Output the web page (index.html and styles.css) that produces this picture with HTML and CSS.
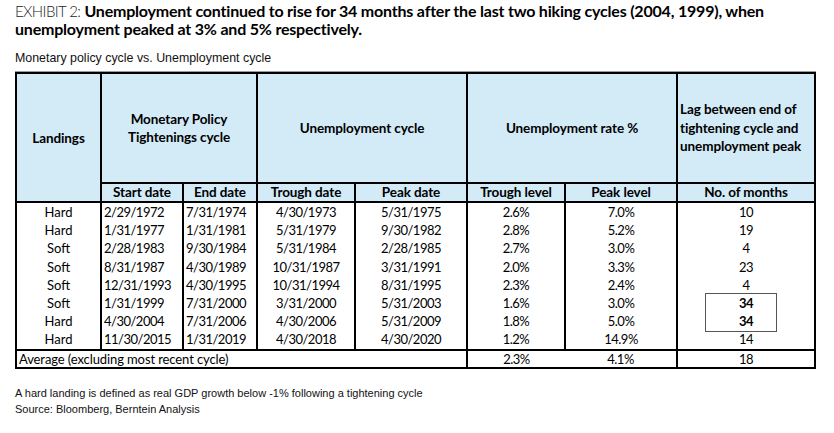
FILE: index.html
```html
<!DOCTYPE html>
<html lang="en">
<head>
<meta charset="utf-8">
<title>Exhibit 2</title>
<link rel="stylesheet" href="styles.css">
</head>
<body>
<div class="page">
  <div class="title">
    <div class="title-line"><span class="exhibit">EXHIBIT 2:</span> <span class="headline">Unemployment continued to rise for 34 months after the last two hiking cycles (2004, 1999), when</span></div>
    <div class="title-line"><span class="headline">unemployment peaked at 3% and 5% respectively.</span></div>
  </div>
  <div class="subtitle">Monetary policy cycle vs. Unemployment cycle</div>
  <table class="data">
    <colgroup>
      <col class="c-land"><col class="c-start"><col class="c-end"><col class="c-tdate"><col class="c-pdate"><col class="c-tlev"><col class="c-plev"><col class="c-lag">
    </colgroup>
    <thead>
      <tr class="head-main">
        <th rowspan="2" class="h-land">Landings</th>
        <th colspan="2">Monetary Policy<br>Tightenings cycle</th>
        <th colspan="2">Unemployment cycle</th>
        <th colspan="2">Unemployment rate %</th>
        <th class="h-lag">Lag between end of tightening cycle and unemployment peak</th>
      </tr>
      <tr class="head-sub">
        <th>Start date</th>
        <th>End date</th>
        <th>Trough date</th>
        <th>Peak date</th>
        <th>Trough level</th>
        <th>Peak level</th>
        <th>No. of months</th>
      </tr>
    </thead>
    <tbody>
      <tr><td class="land">Hard</td><td class="left">2/29/1972</td><td class="left">7/31/1974</td><td>4/30/1973</td><td>5/31/1975</td><td>2.6%</td><td>7.0%</td><td>10</td></tr>
      <tr><td class="land">Hard</td><td class="left">1/31/1977</td><td class="left">1/31/1981</td><td>5/31/1979</td><td>9/30/1982</td><td>2.8%</td><td>5.2%</td><td>19</td></tr>
      <tr><td class="land">Soft</td><td class="left">2/28/1983</td><td class="left">9/30/1984</td><td>5/31/1984</td><td>2/28/1985</td><td>2.7%</td><td>3.0%</td><td>4</td></tr>
      <tr><td class="land">Soft</td><td class="left">8/31/1987</td><td class="left">4/30/1989</td><td>10/31/1987</td><td>3/31/1991</td><td>2.0%</td><td>3.3%</td><td>23</td></tr>
      <tr><td class="land">Soft</td><td class="left">12/31/1993</td><td class="left">4/30/1995</td><td>10/31/1994</td><td>8/31/1995</td><td>2.3%</td><td>2.4%</td><td>4</td></tr>
      <tr><td class="land">Soft</td><td class="left">1/31/1999</td><td class="left">7/31/2000</td><td>3/31/2000</td><td>5/31/2003</td><td>1.6%</td><td>3.0%</td><td class="boxed"><span class="highlight"></span><b>34</b></td></tr>
      <tr><td class="land">Hard</td><td class="left">4/30/2004</td><td class="left">7/31/2006</td><td>4/30/2006</td><td>5/31/2009</td><td>1.8%</td><td>5.0%</td><td><b>34</b></td></tr>
      <tr><td class="land">Hard</td><td class="left">11/30/2015</td><td class="left">1/31/2019</td><td>4/30/2018</td><td>4/30/2020</td><td>1.2%</td><td>14.9%</td><td>14</td></tr>
    </tbody>
    <tfoot>
      <tr class="avg">
        <td colspan="5" class="left avg-label">Average (excluding most recent cycle)</td>
        <td class="no-right">2.3%</td>
        <td class="no-left">4.1%</td>
        <td>18</td>
      </tr>
    </tfoot>
  </table>
  <div class="notes">
    <div>A hard landing is defined as real GDP growth below -1% following a tightening cycle</div>
    <div>Source: Bloomberg, Berntein Analysis</div>
  </div>
</div>
</body>
</html>
```
FILE: styles.css
```css
html, body {
  margin: 0;
  padding: 0;
  background: #ffffff;
}

.page {
  padding: 2px 0 0 15px;
  color: #000;
}

.title {
  font-family: Lato, "Liberation Sans", sans-serif;
  font-size: 16px;
  line-height: 18px;
  width: 800px;
}

.title-line {
  white-space: nowrap;
}

.exhibit {
  font-weight: 300;
  font-size: 15px;
  letter-spacing: -0.6px;
  color: #222;
}

.headline {
  font-weight: 700;
  letter-spacing: -0.2px;
}

.subtitle {
  font-family: "Liberation Sans", Arial, sans-serif;
  font-size: 12.4px;
  line-height: 14px;
  margin-top: 13px;
  color: #111;
}

.data {
  margin-top: 7px;
  border-collapse: collapse;
  table-layout: fixed;
  width: 799px;
  font-family: Lato, "Liberation Sans", sans-serif;
  font-size: 13px;
  letter-spacing: -0.5px;
  color: #000;
  box-shadow: 0 -1px 0 #9a9a9a;
}

.c-land { width: 85px; }
.c-start { width: 82px; }
.c-end { width: 74px; }
.c-tdate { width: 98px; }
.c-pdate { width: 112px; }
.c-tlev { width: 98px; }
.c-plev { width: 112px; }
.c-lag { width: 138px; }

.data th,
.data td {
  border-left: 2px solid #000;
  border-right: 2px solid #000;
  padding: 0 2px;
  text-align: center;
  white-space: nowrap;
}

.data th {
  background: #d3eaf7;
  font-weight: 700;
  font-size: 13.5px;
  letter-spacing: -0.1px;
  border: 2px solid #000;
}

.head-main th {
  height: 108px;
  line-height: 18px;
  vertical-align: middle;
}

.head-main .h-lag {
  text-align: left;
  white-space: normal;
  padding: 0 4px 0 2px;
  line-height: 18.5px;
}

.head-sub th {
  height: 17px;
  line-height: 17px;
}

.data tbody td {
  height: 18.2px;
  line-height: 18px;
}

.data td.land {
  letter-spacing: 0;
}

.data td.avg-label {
  font-size: 13px;
  letter-spacing: -0.1px;
}

.data td.left {
  text-align: left;
}

.data td b {
  font-weight: 700;
}

.boxed {
  position: relative;
}

.highlight {
  position: absolute;
  left: 27px;
  top: -1px;
  width: 70px;
  height: 37px;
  border: 1px solid #555;
}

.avg td {
  border-top: 2px solid #000;
  border-bottom: 2px solid #000;
  height: 16px;
  line-height: 16px;
}

.avg td.no-right {
  border-right: none;
}

.avg td.no-left {
  border-left: none;
}

.notes {
  font-family: "Liberation Sans", Arial, sans-serif;
  font-size: 11px;
  line-height: 16px;
  margin-top: 16px;
  color: #111;
}
```
